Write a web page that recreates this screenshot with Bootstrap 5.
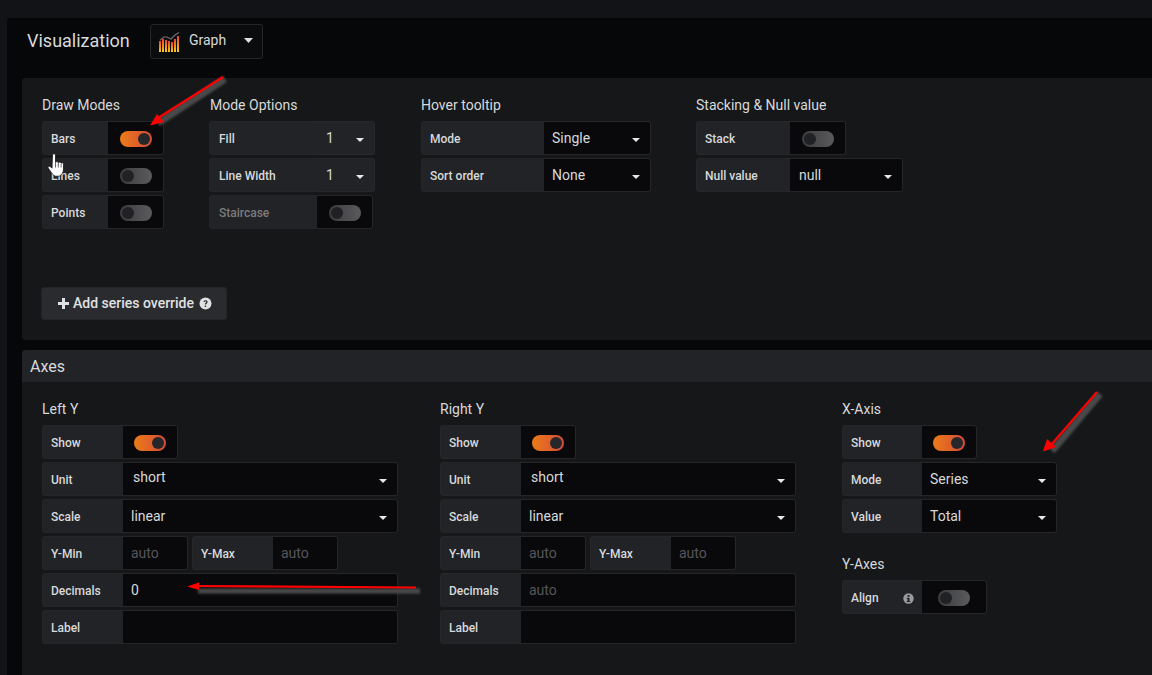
<!doctype html>
<html lang="en">
<head>
<meta charset="utf-8">
<title>Visualization</title>
<link href="https://cdn.jsdelivr.net/npm/bootstrap@5.3.0/dist/css/bootstrap.min.css" rel="stylesheet">
<style>
html,body{height:675px;overflow:hidden}
body{background:#121316;font-family:Roboto,"Liberation Sans",sans-serif;color:#d8d9da;font-size:14px;line-height:1.2;position:relative}
.page-wrap{margin:18px 0 0 7px;padding-left:15px;background:#060709;border-radius:3px 0 0 0}
.viz-head{height:60px;padding:6px 0 0 5px}
.viz-title{font-size:18px;font-weight:400;width:123px;line-height:33px;margin:0;color:#d8d9da}
.viz-select{width:113px;height:35px;border:1px solid #262628;border-radius:3px;background:#0b0c0e;padding-left:8px;padding-bottom:2px;font-size:14px}
.viz-select svg:first-child{margin-right:8px;margin-top:2px}
.viz-caret{margin-left:auto;margin-right:9px}
.edit-panel{background:#161719;border-radius:3px 0 0 3px;height:262px;padding:19px 0 0 20px}
.axes-head{background:#212327;height:32px;margin-top:10px;padding:0 8px;font-size:16px;line-height:34px;border-radius:3px 0 0 0}
.axes-body{background:#161719;height:293px;padding:19px 0 0 20px}
.grp-title{font-size:14px;color:#d8d9da;line-height:17px;height:17px;margin:0 0 7px;font-weight:400}
.rows{display:flex;flex-direction:column;gap:3px}
.frow{display:flex;height:34px}
.flab{background:#212327;border:1px solid #262628;border-right:0;border-radius:3px 0 0 3px;font-size:12px;font-weight:500;padding:2px 0 0 8px;line-height:30px;color:#d8d9da;flex:none;display:flex;align-items:center}
.flab.muted-lab{color:#7b7b7b}
.fval{background:#09090b;border:1px solid #262628;border-left:0;border-radius:0 3px 3px 0;flex:none;display:flex;align-items:center;padding-left:8px;font-size:14px;color:#d8d9da;position:relative}
.fval.dim{color:#55565a}
.fval.soft{background:#212327;border-color:#26282b}
.fval.shift{padding-left:9px}
.fval.raise{padding-left:10px;padding-bottom:4px}
.fval.nudge{padding-left:9px}
.sw-cell{justify-content:center;padding:2px 0 0}
.col-nudge .flab{padding-left:9px}
.col-nudge .grp-title{padding-left:1px}
.tog{display:block;width:32px;height:16px;border-radius:8px;background:linear-gradient(90deg,#3c3c3e,#5a5a5c);position:relative}
.tog::after{content:"";position:absolute;left:2px;top:2px;width:12px;height:12px;border-radius:50%;background:#202124}
.tog.on{background:linear-gradient(90deg,#eb7b18,#d44a3a)}
.tog.on::after{left:18px;background:#26272a}
.dcaret{position:absolute;right:10px;top:16px;width:0;height:0;border:4px solid transparent;border-top:4px solid #e8e8e8;border-bottom:0}
.w66{width:66px}.w56{width:56px}.w108{width:108px}.w58{width:58px}.w123{width:123px}.w107{width:107px}.w94{width:94px}.w113{width:113px}.w81{width:81px}.w55{width:55px}.w275{width:275px}.w65{width:65px}.w80{width:80px}.w135{width:135px}
.m-col1{width:167px}.m-col2{width:212px}.m-col3{width:275px}
.add-btn{width:186px;height:33px;margin-top:58px;margin-left:-1px;background:#2a2b2e;border:1px solid #232427;border-radius:3px;color:#e0e1e2;font-size:14px;font-weight:500;padding:0 0 0 16px;display:flex;align-items:center;justify-content:flex-start;gap:4px}
.add-btn:hover{background:#2a2b2e;color:#e0e1e2}
.add-btn span{margin-right:1px}
.ax-col1{width:398px}.ax-col2{width:402px}
.gap-y{margin-top:23px}
.over{position:absolute;left:0;top:0;pointer-events:none}
</style>
</head>
<body>
<div class="page-wrap">
  <div class="viz-head d-flex align-items-start">
    <h2 class="viz-title">Visualization</h2>
    <div class="viz-select d-flex align-items-center">
      <svg width="22" height="20" viewBox="0 0 22 20" aria-hidden="true">
        <defs><linearGradient id="gb" x1="0" y1="0" x2="0" y2="1"><stop offset="0" stop-color="#e8442c"/><stop offset=".6" stop-color="#f3921c"/><stop offset="1" stop-color="#fbd020"/></linearGradient></defs>
        <polyline points="1,8 5,5 8,5 12,7 16,3 20,0.500" fill="none" stroke="#6c6d70" stroke-width="1.2"/>
        <g fill="url(#gb)">
          <rect x="0" y="9" width="2" height="11"/><rect x="3" y="7" width="2" height="13"/><rect x="6" y="8" width="2" height="12"/><rect x="9" y="9" width="2" height="11"/><rect x="12" y="10" width="2" height="10"/><rect x="15" y="7" width="2" height="13"/><rect x="18" y="4" width="2" height="16"/>
        </g>
      </svg>
      <span>Graph</span>
      <svg class="viz-caret" width="9" height="5" viewBox="0 0 9 5" aria-hidden="true"><path d="M0 0h9L4.500 5z" fill="#e0e0e0"/></svg>
    </div>
  </div>

  <section class="edit-panel">
    <div class="d-flex">
      <div class="m-col1">
        <h5 class="grp-title">Draw Modes</h5>
        <div class="rows">
          <div class="frow"><div class="flab w66">Bars</div><div class="fval sw-cell w56"><span class="tog on"></span></div></div>
          <div class="frow"><div class="flab w66">Lines</div><div class="fval sw-cell w56"><span class="tog"></span></div></div>
          <div class="frow"><div class="flab w66">Points</div><div class="fval sw-cell w56"><span class="tog"></span></div></div>
        </div>
      </div>
      <div class="m-col2 col-nudge">
        <h5 class="grp-title">Mode Options</h5>
        <div class="rows">
          <div class="frow"><div class="flab w108">Fill</div><div class="fval soft shift w58">1<i class="dcaret"></i></div></div>
          <div class="frow"><div class="flab w108">Line Width</div><div class="fval soft shift w58">1<i class="dcaret"></i></div></div>
          <div class="frow"><div class="flab w108 muted-lab">Staircase</div><div class="fval sw-cell w56"><span class="tog"></span></div></div>
        </div>
      </div>
      <div class="m-col3">
        <h5 class="grp-title">Hover tooltip</h5>
        <div class="rows">
          <div class="frow"><div class="flab w123">Mode</div><div class="fval w107">Single<i class="dcaret"></i></div></div>
          <div class="frow"><div class="flab w123">Sort order</div><div class="fval w107">None<i class="dcaret"></i></div></div>
        </div>
      </div>
      <div>
        <h5 class="grp-title">Stacking &amp; Null value</h5>
        <div class="rows">
          <div class="frow"><div class="flab w94">Stack</div><div class="fval sw-cell w56"><span class="tog"></span></div></div>
          <div class="frow"><div class="flab w94">Null value</div><div class="fval nudge w113">null<i class="dcaret"></i></div></div>
        </div>
      </div>
    </div>
    <button type="button" class="btn add-btn">
      <svg width="11" height="11" viewBox="0 0 11 11" aria-hidden="true"><path d="M4 0h3v4h4v3H7v4H4V7H0V4h4z" fill="#e0e1e2"/></svg>
      <span>Add series override</span>
      <svg width="13" height="13" viewBox="0 0 13 13" aria-hidden="true"><circle cx="6.500" cy="6.500" r="6" fill="#e0e1e2"/><path d="M4.600 5.100c0-1.200 1-1.800 2-1.800s2 .6 2 1.700c0 1.500-1.600 1.400-1.600 2.600H5.800c0-1.800 1.400-1.700 1.400-2.600 0-.4-.3-.7-.7-.7-.5 0-.7.3-.8.8z" fill="#2a2b2e"/><rect x="5.800" y="8.600" width="1.300" height="1.400" fill="#2a2b2e"/></svg>
    </button>
  </section>

  <div class="axes-head">Axes</div>
  <section class="axes-body">
    <div class="d-flex">
      <div class="ax-col1">
        <h5 class="grp-title">Left Y</h5>
        <div class="rows">
          <div class="frow"><div class="flab w81">Show</div><div class="fval sw-cell w55"><span class="tog on"></span></div></div>
          <div class="frow"><div class="flab w81">Unit</div><div class="fval w275 raise">short<i class="dcaret"></i></div></div>
          <div class="frow"><div class="flab w81">Scale</div><div class="fval w275">linear<i class="dcaret"></i></div></div>
          <div class="frow gap-1"><div class="d-flex"><div class="flab w81">Y-Min</div><div class="fval dim w65">auto</div></div><div class="d-flex"><div class="flab w81">Y-Max</div><div class="fval dim w65">auto</div></div></div>
          <div class="frow"><div class="flab w81">Decimals</div><div class="fval w275">0</div></div>
          <div class="frow"><div class="flab w81">Label</div><div class="fval w275"></div></div>
        </div>
      </div>
      <div class="ax-col2">
        <h5 class="grp-title">Right Y</h5>
        <div class="rows">
          <div class="frow"><div class="flab w81">Show</div><div class="fval sw-cell w55"><span class="tog on"></span></div></div>
          <div class="frow"><div class="flab w81">Unit</div><div class="fval w275 raise">short<i class="dcaret"></i></div></div>
          <div class="frow"><div class="flab w81">Scale</div><div class="fval w275">linear<i class="dcaret"></i></div></div>
          <div class="frow gap-1"><div class="d-flex"><div class="flab w81">Y-Min</div><div class="fval dim w65">auto</div></div><div class="d-flex"><div class="flab w81">Y-Max</div><div class="fval dim w65">auto</div></div></div>
          <div class="frow"><div class="flab w81">Decimals</div><div class="fval dim w275">auto</div></div>
          <div class="frow"><div class="flab w81">Label</div><div class="fval w275"></div></div>
        </div>
      </div>
      <div>
        <h5 class="grp-title">X-Axis</h5>
        <div class="rows">
          <div class="frow"><div class="flab w80">Show</div><div class="fval sw-cell w55"><span class="tog on"></span></div></div>
          <div class="frow"><div class="flab w80">Mode</div><div class="fval w135">Series<i class="dcaret"></i></div></div>
          <div class="frow"><div class="flab w80">Value</div><div class="fval w135">Total<i class="dcaret"></i></div></div>
        </div>
        <h5 class="grp-title gap-y">Y-Axes</h5>
        <div class="frow"><div class="flab w80 justify-content-between pe-2">Align
          <svg width="11" height="11" viewBox="0 0 11 11" aria-hidden="true"><circle cx="5.500" cy="5.500" r="5.200" fill="#9a9b9d"/><rect x="4.500" y="2" width="2" height="1.800" fill="#212327"/><path d="M3.800 4.800h2.700v3.200h.8v1H3.800V8h.7V5.800h-.7z" fill="#212327"/></svg>
        </div><div class="fval sw-cell w65"><span class="tog"></span></div></div>
      </div>
    </div>
  </section>
</div>

<svg class="over" width="1152" height="675" viewBox="0 0 1152 675" aria-hidden="true">
  <defs><filter id="bl" x="-20%" y="-20%" width="140%" height="140%"><feGaussianBlur stdDeviation=".8"/></filter></defs>
  <g filter="url(#bl)" fill="none" stroke="#4a4a4a" stroke-width="7">
    <path d="M225 79 158 123"/>
    <path d="M420 591 198 591" stroke-width="5"/>
    <path d="M1100 394 1052 451"/>
  </g>
  <g fill="none" stroke="#f00" stroke-width="2.200">
    <path d="M223 77 158 118"/>
    <path d="M416 587.500 195 586"/>
    <path d="M1097 392 1051 445"/>
  </g>
  <path d="M150 125.500 157 114 164 122z" fill="#f00"/>
  <path d="M187 586.500 199 582.500 199 590z" fill="#f00"/>
  <path d="M1043 451.500 1047 439 1056 447z" fill="#f00"/>
  <path d="M52.500 155c0-1.800 3-1.800 3 0v7.500c.3-1.300 2.600-1.200 2.800.3.500-1.200 2.600-1 2.800.5.600-1 2.400-.6 2.400.9v4.800c0 3.400-1.700 6-4.200 7.200h-4c-2.200-1-3.800-3.300-5.400-5.800-1-1.500-2.400-2.800-1.600-3.800 1-1 2.700.3 3.700 1.600z" fill="#fff" stroke="#111" stroke-width=".8"/>
  <path d="M55.500 163v4.500M58.300 163v4.500M61.100 164v3.500" fill="none" stroke="#222" stroke-width=".7"/>
</svg>
</body>
</html>
